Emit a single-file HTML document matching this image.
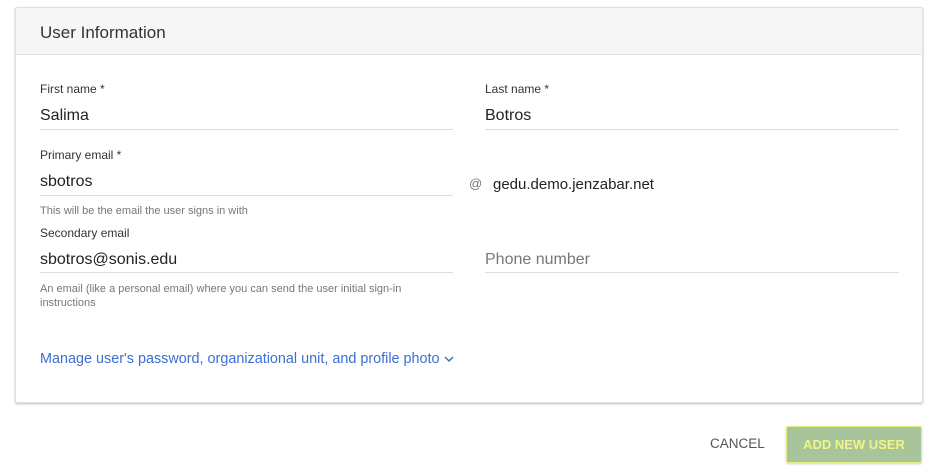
<!DOCTYPE html>
<html><head><style>
body{margin:0;width:936px;height:472px;background:#fff;font-family:"Liberation Sans",Arial,sans-serif;position:relative;overflow:hidden}
.card{position:absolute;left:15px;top:7px;width:906px;height:394px;border:1px solid #e0e0e0;border-radius:2px;box-shadow:0 1px 2px rgba(0,0,0,.25);background:#fff}
.hdr{height:46px;background:#f6f6f6;border-bottom:1px solid #e2e2e2;font-size:17px;color:#333;line-height:50px;padding-left:24px}
.a{position:absolute}
.lbl{font-size:12px;color:#333}
.val{font-size:16px;color:#222}
.line{height:1px;background:#ddd}
.hint{font-size:11px;color:#777;line-height:14px}
</style></head><body>
<div class="card"><div class="hdr">User Information</div></div>
<div class="a lbl" style="left:40px;top:82px">First name *</div>
<div class="a val" style="left:40px;top:107px">Salima</div>
<div class="a line" style="left:40px;top:129px;width:413px"></div>
<div class="a lbl" style="left:485px;top:82px">Last name *</div>
<div class="a val" style="left:485px;top:107px">Botros</div>
<div class="a line" style="left:485px;top:129px;width:414px"></div>
<div class="a lbl" style="left:40px;top:148px">Primary email *</div>
<div class="a val" style="left:40px;top:173px">sbotros</div>
<div class="a line" style="left:40px;top:195px;width:413px"></div>
<div class="a" style="left:469px;top:176px;font-size:13px;color:#777">@</div>
<div class="a val" style="left:493px;top:176px;font-size:15px">gedu.demo.jenzabar.net</div>
<div class="a hint" style="left:40px;top:204px">This will be the email the user signs in with</div>
<div class="a lbl" style="left:40px;top:226px">Secondary email</div>
<div class="a val" style="left:40px;top:251px">sbotros@sonis.edu</div>
<div class="a line" style="left:40px;top:272px;width:413px"></div>
<div class="a val" style="left:485px;top:251px;color:#777">Phone number</div>
<div class="a line" style="left:485px;top:272px;width:414px"></div>
<div class="a hint" style="left:40px;top:282px;width:420px">An email (like a personal email) where you can send the user initial sign-in instructions</div>
<div class="a" style="left:40px;top:351px;font-size:14.4px;color:#3b6fd4">Manage user's password, organizational unit, and profile photo <svg width="10" height="8" viewBox="0 0 10 8"><path d="M1 2l4 4 4-4" stroke="#3b6fd4" stroke-width="1.5" fill="none"/></svg></div>
<div class="a" style="left:710px;top:436px;font-size:13.5px;color:#555">CANCEL</div>
<div class="a" style="left:786px;top:426px;width:134px;height:35px;background:#a8c49a;border:1px solid #e6f08a;border-radius:2px;box-shadow:0 1px 2px rgba(0,0,0,.2);color:#eef58a;font-weight:bold;font-size:13px;text-align:center;line-height:35px">ADD NEW USER</div>
</body></html>
